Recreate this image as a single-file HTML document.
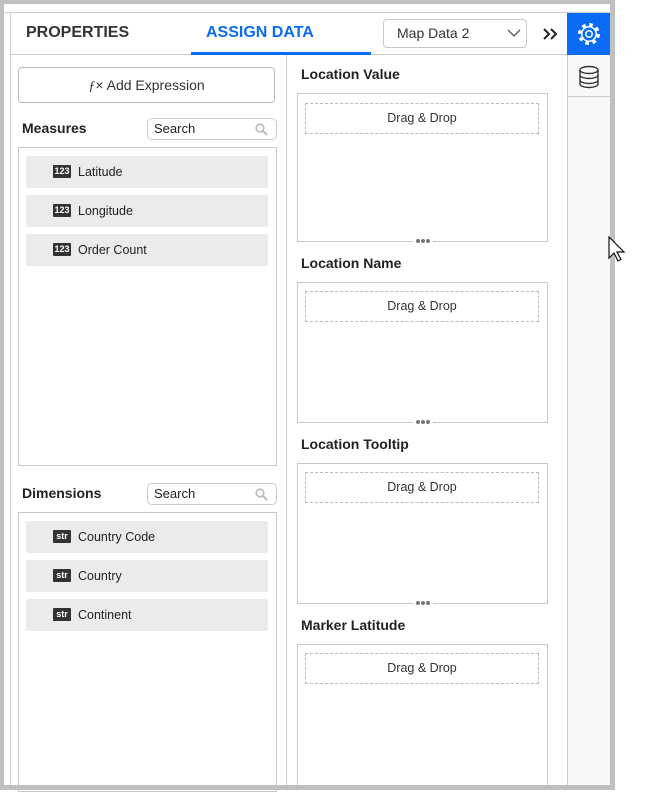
<!DOCTYPE html><html><head><style>
*{box-sizing:border-box;margin:0;padding:0}
body{width:657px;height:790px;background:#fff;font-family:"Liberation Sans",Arial,sans-serif;position:relative;overflow:hidden;color:#222}
.a{position:absolute}
.gr{background:#c0c0c0}
.t{font-weight:bold;font-size:14px;color:#222}
.box{border:1px solid #c8c8c8;background:#fff}
.dd{border:1px dashed #bbb;font-size:12.5px;text-align:center;line-height:28px;color:#333}
.it{background:#ebebeb;border-radius:2px;font-size:12.5px;color:#222;line-height:32px;padding-left:52px;height:32px}
.ic{position:absolute;left:27px;top:9px;width:18px;height:13px;background:#333;color:#fff;font-size:9px;font-weight:bold;line-height:13px;text-align:center;border-radius:1px}
.srch{border:1px solid #ccc;border-radius:5px;font-size:13px;line-height:20px;padding-left:6px;color:#222}
.dots{position:absolute;width:20px;height:6px;background:#fff;left:50%;margin-left:-10px;top:calc(100% - 3px);font-size:0;line-height:0;display:flex;justify-content:center;align-items:center;gap:1px}
.dots i{display:block;width:4px;height:4px;border-radius:2px;background:#777}
</style></head><body>
<div class="a gr" style="left:0;top:0;width:615px;height:4px"></div>
<div class="a gr" style="left:0;top:0;width:4px;height:790px"></div>
<div class="a gr" style="left:610px;top:0;width:5px;height:790px"></div>
<div class="a" style="left:4px;top:12px;width:606px;height:1px;background:#ccc"></div>
<div class="a" style="left:10px;top:12px;width:1px;height:773px;background:#ccc"></div>
<div class="a" style="left:567px;top:13px;width:43px;height:772px;background:#f8f8f8;border-left:1px solid #ccc"></div>
<div class="a" style="left:567px;top:13px;width:43px;height:42px;background:#0a6cf5"></div>
<svg class="a" style="left:577px;top:22px" width="24" height="24" viewBox="0 0 24 24">
<circle cx="12" cy="12" r="9.3" fill="none" stroke="#fff" stroke-width="3.4" stroke-dasharray="3.6 3.7"/>
<circle cx="12" cy="12" r="8" fill="#fff"/>
<circle cx="12" cy="12" r="6.5" fill="#0a6cf5"/>
<circle cx="12" cy="12" r="3.2" fill="none" stroke="#fff" stroke-width="1.5"/>
</svg>
<div class="a" style="left:568px;top:96px;width:42px;height:1px;background:#ccc"></div>
<svg class="a" style="left:578px;top:65px" width="22" height="24" viewBox="0 0 22 24" fill="none" stroke="#333" stroke-width="1.4"><ellipse cx="11" cy="5" rx="9" ry="3.5"/><path d="M2 5v14c0 2 4 3.5 9 3.5s9-1.5 9-3.5V5M2 10c0 2 4 3.5 9 3.5s9-1.5 9-3.5M2 15c0 2 4 3.5 9 3.5s9-1.5 9-3.5"/></svg>
<svg class="a" style="left:608px;top:236px" width="20" height="28" viewBox="0 0 20 28"><path d="M1 1v21l5-5 4 8 3-1.5-4-7.5h7z" fill="#fff" stroke="#111" stroke-width="1.2"/></svg>
<div class="a" style="left:11px;top:54px;width:556px;height:1px;background:#ccc"></div>
<div class="a" style="left:26px;top:24px;font-size:16px;font-weight:bold;color:#333">PROPERTIES</div>
<div class="a" style="left:206px;top:24px;font-size:16px;font-weight:bold;color:#0a6cf5">ASSIGN DATA</div>
<div class="a" style="left:191px;top:52px;width:180px;height:3px;background:#0a6cf5"></div>
<div class="a" style="left:383px;top:19px;width:144px;height:29px;border:1px solid #c8c8c8;border-radius:4px;font-size:14px;line-height:27px;padding-left:13px;color:#333">Map Data 2</div>
<svg class="a" style="left:507px;top:29px" width="14" height="9" viewBox="0 0 14 9" fill="none" stroke="#555" stroke-width="1.3"><path d="M1 1l6 6 6-6"/></svg>
<svg class="a" style="left:543px;top:28px" width="15" height="12" viewBox="0 0 15 12" fill="none" stroke="#222" stroke-width="2"><path d="M1 1l5 5-5 5M8 1l5 5-5 5"/></svg>
<div class="a" style="left:286px;top:55px;width:1px;height:730px;background:#ccc"></div>
<div class="a" style="left:18px;top:67px;width:257px;height:36px;border:1px solid #bbb;border-radius:4px;text-align:center;line-height:34px;font-size:14px;color:#333"><span style="font-style:italic;font-family:'Liberation Serif',serif">ƒ</span>× Add Expression</div>
<div class="a t" style="left:22px;top:120px">Measures</div>
<div class="a srch" style="left:147px;top:118px;width:130px;height:22px">Search</div>
<svg class="a" style="left:255px;top:123px" width="13" height="13" viewBox="0 0 13 13"><circle cx="5" cy="5" r="3.8" fill="none" stroke="#bbb" stroke-width="1.6"/><path d="M8 8l4 4" stroke="#bbb" stroke-width="2"/></svg>
<div class="a box" style="left:18px;top:147px;width:259px;height:319px"></div>
<div class="a it" style="left:26px;top:156px;width:242px"><span class="ic">123</span>Latitude</div>
<div class="a it" style="left:26px;top:195px;width:242px"><span class="ic">123</span>Longitude</div>
<div class="a it" style="left:26px;top:234px;width:242px"><span class="ic">123</span>Order Count</div>
<div class="a t" style="left:22px;top:485px">Dimensions</div>
<div class="a srch" style="left:147px;top:483px;width:130px;height:22px">Search</div>
<svg class="a" style="left:255px;top:488px" width="13" height="13" viewBox="0 0 13 13"><circle cx="5" cy="5" r="3.8" fill="none" stroke="#bbb" stroke-width="1.6"/><path d="M8 8l4 4" stroke="#bbb" stroke-width="2"/></svg>
<div class="a box" style="left:18px;top:512px;width:259px;height:280px"></div>
<div class="a it" style="left:26px;top:521px;width:242px"><span class="ic">str</span>Country Code</div>
<div class="a it" style="left:26px;top:560px;width:242px"><span class="ic">str</span>Country</div>
<div class="a it" style="left:26px;top:599px;width:242px"><span class="ic">str</span>Continent</div>

<div class="a t" style="left:301px;top:66px">Location Value</div>
<div class="a box" style="left:297px;top:93px;width:251px;height:149px"><div class="a dd" style="left:7px;top:9px;width:234px;height:31px">Drag &amp; Drop</div><div class="dots"><i></i><i></i><i></i></div></div>
<div class="a t" style="left:301px;top:255px">Location Name</div>
<div class="a box" style="left:297px;top:282px;width:251px;height:141px"><div class="a dd" style="left:7px;top:8px;width:234px;height:31px">Drag &amp; Drop</div><div class="dots"><i></i><i></i><i></i></div></div>
<div class="a t" style="left:301px;top:436px">Location Tooltip</div>
<div class="a box" style="left:297px;top:463px;width:251px;height:141px"><div class="a dd" style="left:7px;top:8px;width:234px;height:31px">Drag &amp; Drop</div><div class="dots"><i></i><i></i><i></i></div></div>
<div class="a t" style="left:301px;top:617px">Marker Latitude</div>
<div class="a box" style="left:297px;top:644px;width:251px;height:142px"><div class="a dd" style="left:7px;top:8px;width:234px;height:31px">Drag &amp; Drop</div></div>
<div class="a gr" style="left:0;top:785px;width:615px;height:5px"></div>
</body></html>
